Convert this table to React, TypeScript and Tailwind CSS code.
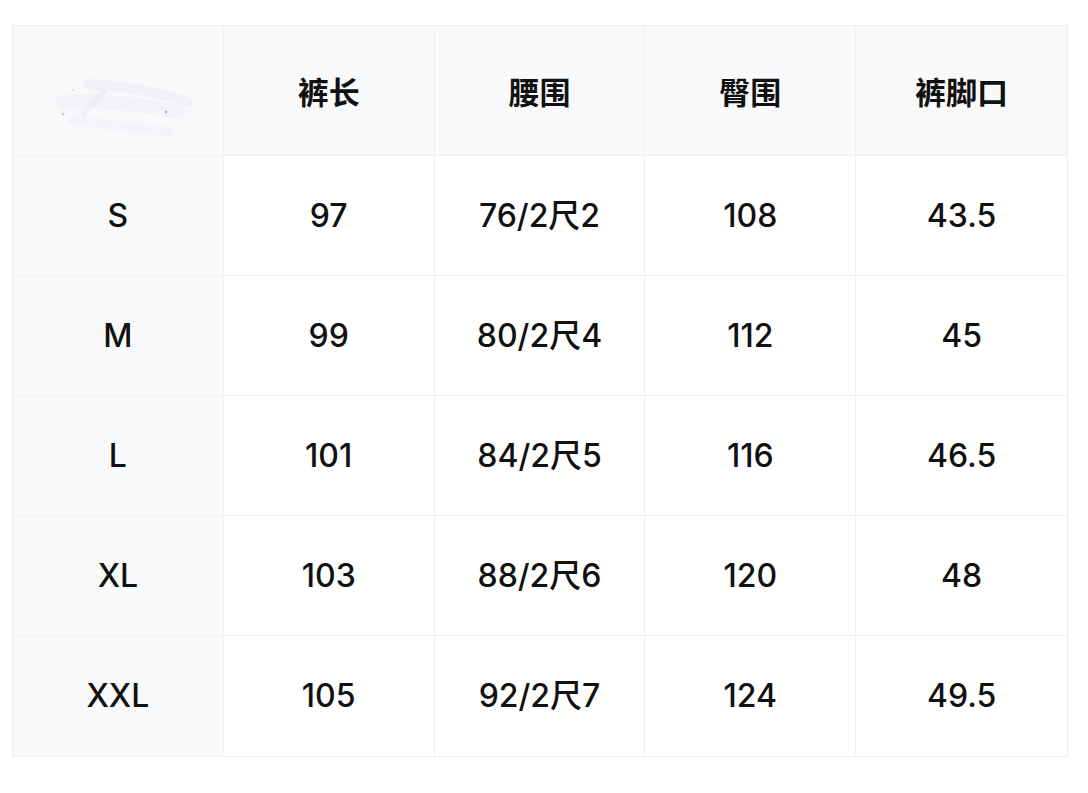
const headers = ["裤长", "腰围", "臀围", "裤脚口"];

const rows = [
  { size: "S", values: ["97", "76/2尺2", "108", "43.5"] },
  { size: "M", values: ["99", "80/2尺4", "112", "45"] },
  { size: "L", values: ["101", "84/2尺5", "116", "46.5"] },
  { size: "XL", values: ["103", "88/2尺6", "120", "48"] },
  { size: "XXL", values: ["105", "92/2尺7", "124", "49.5"] },
];

// faint product photo placeholder in the corner cell
const PantsSketch = () => (
  <svg width="150" height="66" viewBox="0 0 150 66" fill="none">
    <g opacity="0.35" strokeLinecap="round">
      <path d="M45 12 C80 14 115 20 145 30" stroke="#e2e4ec" strokeWidth="10" />
      <path d="M20 30 C55 28 100 32 135 40" stroke="#e6e8ef" strokeWidth="14" />
      <path d="M62 18 L40 42" stroke="#dcdfe8" strokeWidth="6" />
      <path d="M30 48 C60 52 95 56 125 60" stroke="#eaecf2" strokeWidth="10" />
    </g>
    <circle cx="20" cy="42" r="1.3" fill="#c4c7d2" />
    <circle cx="123" cy="40" r="1.2" fill="#a9adb9" />
    <circle cx="30" cy="18" r="0.9" fill="#d2d5de" />
  </svg>
);

export default function App() {
  return (
    <div
      className="min-h-screen bg-white pt-[25px] pl-3"
      style={{ fontFamily: 'Inter, "Noto Sans CJK SC", sans-serif' }}
    >
      <div className="w-[1056px] border border-[#eceef2] grid grid-cols-5 text-[#111]">
        <div className="h-[130px] bg-[#f8f9fb] border-r border-b border-[#eef0f3] flex items-center justify-center pt-7">
          <PantsSketch />
        </div>
        {headers.map((h, i) => (
          <div
            key={h}
            className={`h-[130px] bg-[#f8f9fb] border-b border-[#eef0f3] flex items-center justify-center pt-1.5 text-[31px] font-bold ${i < 3 ? "border-r" : ""}`}
          >
            {h}
          </div>
        ))}
        {rows.map((r, ri) => (
          <div key={r.size} className="contents">
            <div
              className={`h-[120px] bg-[#f8f9fb] border-r border-[#eef0f3] flex items-center justify-center text-[32px] font-medium ${ri < rows.length - 1 ? "border-b" : ""}`}
            >
              {r.size}
            </div>
            {r.values.map((v, vi) => (
              <div
                key={vi}
                className={`h-[120px] bg-white border-[#eef0f3] flex items-center justify-center text-[32px] font-medium ${vi < 3 ? "border-r" : ""} ${ri < rows.length - 1 ? "border-b" : ""}`}
              >
                {v}
              </div>
            ))}
          </div>
        ))}
      </div>
    </div>
  );
}
